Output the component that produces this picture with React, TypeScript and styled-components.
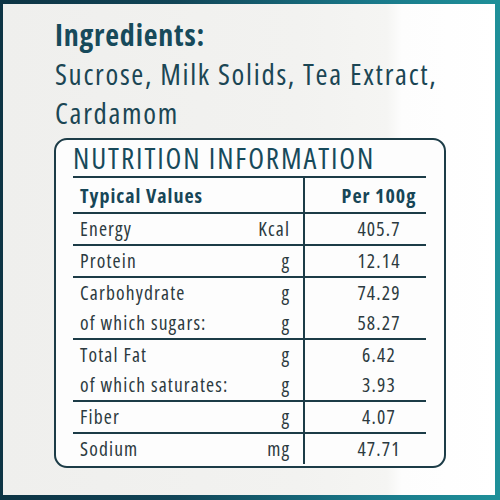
import React from "react";
import styled, { createGlobalStyle } from "styled-components";

const Global = createGlobalStyle`
  html, body { margin: 0; padding: 0; }
  body { font-family: "Open Sans", "Liberation Sans", sans-serif; font-stretch: 75%; }
`;

const Frame = styled.div`
  width: 500px;
  height: 500px;
  box-sizing: border-box;
  padding: 4px 5px 5px 3px;
  background: linear-gradient(90deg, #0d3444 0%, #114557 35%, #19798a 75%, #1f9099 100%);
`;

const Panel = styled.div`
  width: 100%;
  height: 100%;
  box-sizing: border-box;
  padding: 11px 0 0 52px;
  background: linear-gradient(90deg, #efefed 0%, #f2f2f0 60%, #f5f5f3 78%, #fdfdfd 81%, #ffffff 100%);
  display: flex;
  flex-direction: column;
  align-items: flex-start;
`;

const Heading = styled.div`
  font-family: "Open Sans", "Liberation Sans", sans-serif;
  font-stretch: 75%;
  font-weight: 700;
  font-size: 30px;
  line-height: 39px;
  letter-spacing: 0.8px;
  color: #174a5b;
`;

const Ingredients = styled.div`
  font-family: "Open Sans", "Liberation Sans", sans-serif;
  font-stretch: 75%;
  font-size: 29px;
  line-height: 39px;
  letter-spacing: 1.7px;
  color: #1b4654;
`;

const Box = styled.div`
  margin-top: 6px;
  margin-left: -1px;
  width: 392px;
  height: 330px;
  box-sizing: border-box;
  border: 2px solid #1c3c47;
  border-radius: 13px;
  background: #fdfdfd;
  padding: 0 18px 0 17px;
  display: flex;
  flex-direction: column;
`;

const Title = styled.div`
  font-size: 29px;
  line-height: 36px;
  letter-spacing: 1.9px;
  color: #174a5b;
  border-bottom: 2px solid #1c3c47;
`;

const Row = styled.div<{ $last?: boolean }>`
  display: grid;
  grid-template-columns: 230px 1fr;
  border-bottom: ${(p) => (p.$last ? "none" : "2px solid #1c3c47")};
`;

const LabelCell = styled.div`
  display: flex;
  flex-direction: column;
  padding: 0 14px 0 7px;
`;

const Line = styled.div<{ $head?: boolean }>`
  display: flex;
  justify-content: space-between;
  font-size: ${(p) => (p.$head ? "20px" : "19.5px")};
  font-weight: ${(p) => (p.$head ? 700 : 400)};
  line-height: ${(p) => (p.$head ? "33px" : "30px")};
  letter-spacing: ${(p) => (p.$head ? "1px" : "1.15px")};
  padding-top: ${(p) => (p.$head ? "1px" : "0")};
  color: ${(p) => (p.$head ? "#174657" : "#2c3a40")};
`;

const Unit = styled.span`
  margin-right: -1.15px;
`;

const ValueCell = styled.div`
  border-left: 2px solid #1c3c47;
  display: flex;
  flex-direction: column;
  align-items: center;
  padding-left: 27px;
`;

const Sodium = styled(Row)`
  height: 27px;
  overflow: visible;
`;

type Item = { lines: { label: string; unit: string; value: string }[] };

const rows: Item[] = [
  { lines: [{ label: "Energy", unit: "Kcal", value: "405.7" }] },
  { lines: [{ label: "Protein", unit: "g", value: "12.14" }] },
  {
    lines: [
      { label: "Carbohydrate", unit: "g", value: "74.29" },
      { label: "of which sugars:", unit: "g", value: "58.27" },
    ],
  },
  {
    lines: [
      { label: "Total Fat", unit: "g", value: "6.42" },
      { label: "of which saturates:", unit: "g", value: "3.93" },
    ],
  },
  { lines: [{ label: "Fiber", unit: "g", value: "4.07" }] },
];

export default function App() {
  return (
    <>
      <Global />
      <Frame>
        <Panel>
          <Heading>Ingredients:</Heading>
          <Ingredients>
            Sucrose, Milk Solids, Tea Extract,
            <br />
            Cardamom
          </Ingredients>
          <Box>
            <Title>NUTRITION INFORMATION</Title>
            <Row>
              <LabelCell>
                <Line $head>
                  <span>Typical Values</span>
                </Line>
              </LabelCell>
              <ValueCell>
                <Line $head>Per 100g</Line>
              </ValueCell>
            </Row>
            {rows.map((r, i) => (
              <Row key={i}>
                <LabelCell>
                  {r.lines.map((l) => (
                    <Line key={l.label}>
                      <span>{l.label}</span>
                      <Unit>{l.unit}</Unit>
                    </Line>
                  ))}
                </LabelCell>
                <ValueCell>
                  {r.lines.map((l) => (
                    <Line key={l.label}>{l.value}</Line>
                  ))}
                </ValueCell>
              </Row>
            ))}
            <Sodium $last>
              <LabelCell>
                <Line>
                  <span>Sodium</span>
                  <Unit>mg</Unit>
                </Line>
              </LabelCell>
              <ValueCell>
                <Line>47.71</Line>
              </ValueCell>
            </Sodium>
          </Box>
        </Panel>
      </Frame>
    </>
  );
}
